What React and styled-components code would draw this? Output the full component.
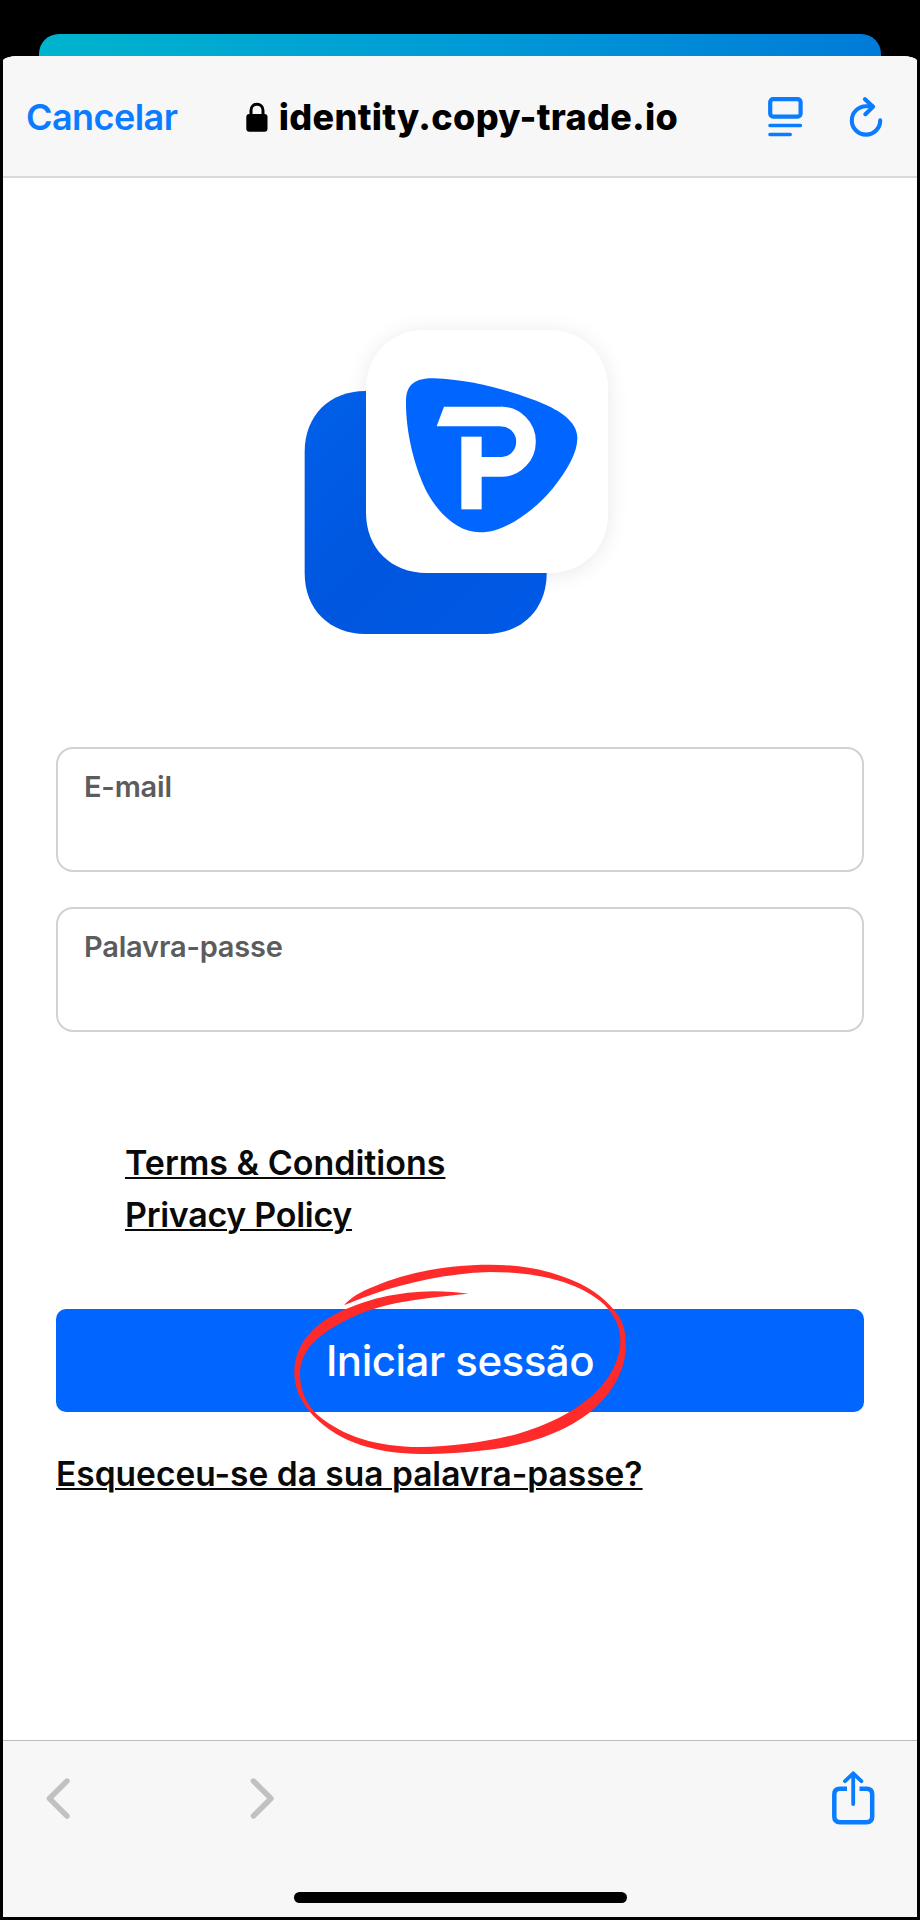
import React, { useState } from "react";
import styled, { createGlobalStyle } from "styled-components";

export default function App() {
  const [email, setEmail] = useState("");
  const [password, setPassword] = useState("");

  const handleSubmit = (event) => {
    event.preventDefault();
  };

  return (
    <>
      <GlobalStyle />
      <Screen>
        <BackCard />
        <Sheet>
          <Header>
            <CancelButton type="button">Cancelar</CancelButton>
            <Address>
              <LockIcon />
              <span>identity.copy-trade.io</span>
            </Address>
            <HeaderActions>
              <ReaderIcon />
              <ReloadIcon />
            </HeaderActions>
          </Header>

          <Content>
            <Logo />
            <Form onSubmit={handleSubmit}>
              <Field>
                <Label>E-mail</Label>
                <input
                  type="email"
                  value={email}
                  onChange={(e) => setEmail(e.target.value)}
                />
              </Field>
              <Field>
                <Label>Palavra-passe</Label>
                <input
                  type="password"
                  value={password}
                  onChange={(e) => setPassword(e.target.value)}
                />
              </Field>
              <Legal>
                <TextLink href="#terms" $size="34px">
                  Terms &amp; Conditions
                </TextLink>
                <TextLink href="#privacy" $size="34px" $spacing="-0.28px">
                  Privacy Policy
                </TextLink>
              </Legal>
              <SubmitRow>
                <SubmitButton type="submit">Iniciar sessão</SubmitButton>
                <Highlight />
              </SubmitRow>
              <TextLink href="#forgot">
                Esqueceu-se da sua palavra-passe?
              </TextLink>
            </Form>
          </Content>

          <Footer>
            <Toolbar>
              <NavButtons>
                <Chevron d="M21 3 L3.4 20.5 L21 38" />
                <Chevron d="M3.4 3 L21 20.5 L3.4 38" />
              </NavButtons>
              <ShareIcon />
            </Toolbar>
            <HomeIndicator />
          </Footer>
        </Sheet>
      </Screen>
    </>
  );
}

function LockIcon() {
  return (
    <svg width="22" height="30" viewBox="0 0 22 30">
      <path
        d="M5 13 V8.5 C5 0.2 17 0.2 17 8.5 V13"
        fill="none"
        stroke="#000"
        strokeWidth="3"
      />
      <rect x="0.3" y="12" width="21.2" height="17.8" rx="3" fill="#000" />
    </svg>
  );
}

function ReaderIcon() {
  return (
    <svg width="35" height="40" viewBox="0 0 35 40">
      <g fill="none" stroke="#0a7cff" strokeLinecap="round">
        <rect x="2.2" y="2.2" width="30.4" height="17.4" rx="3" strokeWidth="4.2" />
        <path d="M2 28.5 H32.4 M2 37.5 H22.2" strokeWidth="3.6" />
      </g>
    </svg>
  );
}

function ReloadIcon() {
  return (
    <svg width="34" height="40" viewBox="0 0 34 40">
      <g
        fill="none"
        stroke="#0a7cff"
        strokeWidth="4.1"
        strokeLinecap="round"
        strokeLinejoin="round"
      >
        <path d="M23.5 9.2 H17 A14.2 14.2 0 1 0 31.2 23.4" />
        <path d="M16 2.2 L24 9.8 L16.4 17.2" />
      </g>
    </svg>
  );
}

function Chevron({ d }) {
  return (
    <svg width="24" height="41" viewBox="0 0 24 41">
      <path
        d={d}
        fill="none"
        stroke="#c1c1c1"
        strokeWidth="5.4"
        strokeLinecap="round"
        strokeLinejoin="round"
      />
    </svg>
  );
}

function ShareIcon() {
  return (
    <svg width="43" height="54" viewBox="0 0 43 54">
      <g fill="none" stroke="#0a7cff" strokeLinejoin="round">
        <path
          d="M15 17.7 H8 Q2.3 17.7 2.3 23.4 V45.5 Q2.3 51.2 8 51.2 H34.5 Q40.2 51.2 40.2 45.5 V23.4 Q40.2 17.7 34.5 17.7 H27.5"
          strokeWidth="4.5"
        />
        <path
          d="M21.2 33 V2.2 M13 10.2 L21.2 2.4 L29.4 10.2"
          strokeWidth="3.8"
          strokeLinecap="round"
        />
      </g>
    </svg>
  );
}

function Logo() {
  return (
    <LogoSvg width="340" height="340" viewBox="0 0 1020 1020">
      <defs>
        <linearGradient id="tile" x1="0" y1="0" x2="1" y2="1">
          <stop offset="0" stopColor="#0060ea" />
          <stop offset="0.5" stopColor="#0056df" />
          <stop offset="1" stopColor="#005ae6" />
        </linearGradient>
        <filter id="soft" x="-20%" y="-20%" width="140%" height="140%">
          <feDropShadow dx="0" dy="6" stdDeviation="30" floodOpacity="0.09" />
        </filter>
      </defs>
      {/* the shadow sits under the blue tile */}
      <path d={tilePath(228, 60)} fill="#fff" filter="url(#soft)" />
      <path d={tilePath(44, 243)} fill="url(#tile)" />
      <path d={tilePath(228, 60)} fill="#fff" />
      <path
        d="M348 268 C350 222 378 204 432 205 C545 208 680 247 760 281 C825 309 862 342 862 385 C862 428 832 480 790 533 C735 601 646 667 570 667 C505 667 446 612 410 545 C371 468 346 360 348 268 Z"
        fill="#0066ff"
      />
      <path d="M462 290 H640 V349 H440 Z" fill="#fff" />
      <path
        d="M632 319.5 C674 319.5 708 353 708 395 C708 437 674 470.5 636 470.5 H560"
        fill="none"
        stroke="#fff"
        strokeWidth="59"
      />
      <rect x="514" y="380" width="61" height="218" fill="#fff" />
    </LogoSvg>
  );
}

function tilePath(x, y) {
  return `M${x} ${y + 182} C${x} ${y + 74} ${x + 74} ${y} ${x + 182} ${y} h362 c108 0 182 74 182 182 v365 c0 108 -74 182 -182 182 h-362 c-108 0 -182 -74 -182 -182 Z`;
}

function Highlight() {
  return (
    <HighlightSvg width="370" height="220" viewBox="0 0 1110 660">
      <path
        d="M192 166 C212 142 240 126 280 110 C390 64 510 44 630 44 C735 44 820 64 898 100 C960 130 1003 175 1020 205 C1034 232 1040 262 1037 300 C1032 370 993 434 931 486 C860 543 752 582 650 596 C570 606 500 612 420 612 C300 611 205 581 143 535 C75 482 43 430 43 365 C44 290 93 233 155 199 C250 146 360 125 460 124 C500 124 535 127 565 131 C500 137 420 146 350 159 C280 173 210 199 150 238 C92 277 60 316 60 375 C61 424 80 463 112 494 C190 560 290 590 420 591 C520 590 620 576 712 552 C800 527 880 487 934 439 C984 394 1020 337 1021 272 C1021 232 1006 199 974 165 C900 96 775 66 630 66 C500 70 380 98 280 132 C250 143 215 156 192 166 Z"
        fill="#ff2a2a"
      />
    </HighlightSvg>
  );
}

const GlobalStyle = createGlobalStyle`
  * {
    box-sizing: border-box;
  }

  body {
    margin: 0;
    background-color: #000;
    font-family: Inter, "Liberation Sans", sans-serif;
  }

  svg {
    display: block;
    flex-shrink: 0;
  }
`;

const Screen = styled.div`
  display: flex;
  flex-direction: column;
  width: 920px;
  height: 1920px;
  padding: 34px 3px 3px;
  background-color: #000;
  overflow: hidden;
`;

const BackCard = styled.div`
  height: 22px;
  margin: 0 36px;
  border-radius: 20px 20px 0 0;
  background: linear-gradient(100deg, #00b4cd 0%, #009bd6 50%, #007bd8 100%);
`;

const Sheet = styled.main`
  flex: 1;
  display: flex;
  flex-direction: column;
  background-color: #fff;
  border-radius: 16px 16px 0 0 / 5px 5px 0 0;
  overflow: hidden;
`;

const Header = styled.header`
  display: grid;
  grid-template-columns: 1fr auto 1fr;
  align-items: center;
  height: 122px;
  padding: 2px 34px 0 23px;
  background-color: #f7f7f7;
  border-bottom: 2px solid #d9d9d9;
`;

const CancelButton = styled.button`
  justify-self: start;
  padding: 0;
  border: none;
  background: none;
  color: #0a7cff;
  font-family: inherit;
  font-size: 36px;
  font-weight: 600;
  line-height: 44px;
  letter-spacing: -0.55px;
`;

const Address = styled.div`
  display: flex;
  align-items: center;
  gap: 11px;
  margin-right: -15px;
  color: #000;
  font-size: 36px;
  font-weight: 800;
  line-height: 44px;
  letter-spacing: 0.3px;
`;

const HeaderActions = styled.div`
  justify-self: end;
  display: flex;
  gap: 46px;
`;

const Content = styled.div`
  flex: 1;
  display: flex;
  flex-direction: column;
  padding: 132px 53px 0;
`;

const LogoSvg = styled.svg`
  margin-left: 234px;
`;

const Form = styled.form`
  display: flex;
  flex-direction: column;
  align-items: flex-start;
  margin-top: 97px;
`;

const Field = styled.label`
  display: flex;
  flex-direction: column;
  width: 100%;
  height: 125px;
  margin-bottom: 35px;
  padding: 20px 26px;
  border: 2px solid #d0d3d6;
  border-radius: 17px;

  input {
    flex: 1;
    min-height: 0;
    padding: 0;
    border: none;
    outline: none;
    background: none;
    font: inherit;
    font-size: 30px;
  }
`;

const Label = styled.span`
  color: #5c5c5c;
  font-size: 29px;
  font-weight: 600;
  line-height: 36px;
  letter-spacing: -0.2px;
`;

const Legal = styled.div`
  display: flex;
  flex-direction: column;
  align-items: flex-start;
  margin: 70px 0 68px 69px;
`;

const TextLink = styled.a`
  color: #0a0a0a;
  font-size: ${(props) => props.$size || "33.5px"};
  font-weight: 600;
  line-height: 52px;
  letter-spacing: ${(props) => props.$spacing || "0"};
  text-decoration: underline;
  text-decoration-thickness: 2px;
  text-underline-offset: 2px;
`;

const SubmitRow = styled.div`
  position: relative;
  width: 100%;
  margin-bottom: 36px;
`;

const SubmitButton = styled.button`
  display: block;
  width: 100%;
  height: 103px;
  padding: 0;
  border: none;
  border-radius: 10px;
  background-color: #0066ff;
  color: #fff;
  font-family: inherit;
  font-size: 42px;
  font-weight: 500;
  letter-spacing: -0.5px;
`;

const HighlightSvg = styled.svg`
  position: absolute;
  top: -59px;
  left: 224px;
  pointer-events: none;
`;

const Footer = styled.footer`
  display: flex;
  flex-direction: column;
  align-items: center;
  justify-content: space-between;
  height: 177px;
  padding: 30px 0 14px;
  background-color: #f7f7f7;
  border-top: 1px solid #bcbcbc;
`;

const Toolbar = styled.div`
  display: flex;
  justify-content: space-between;
  width: 100%;
  padding: 0 42px 0 43px;
`;

const NavButtons = styled.div`
  display: flex;
  gap: 180px;
  padding-top: 7px;
`;

const HomeIndicator = styled.div`
  width: 333px;
  height: 11px;
  border-radius: 6px;
  background-color: #000;
`;
